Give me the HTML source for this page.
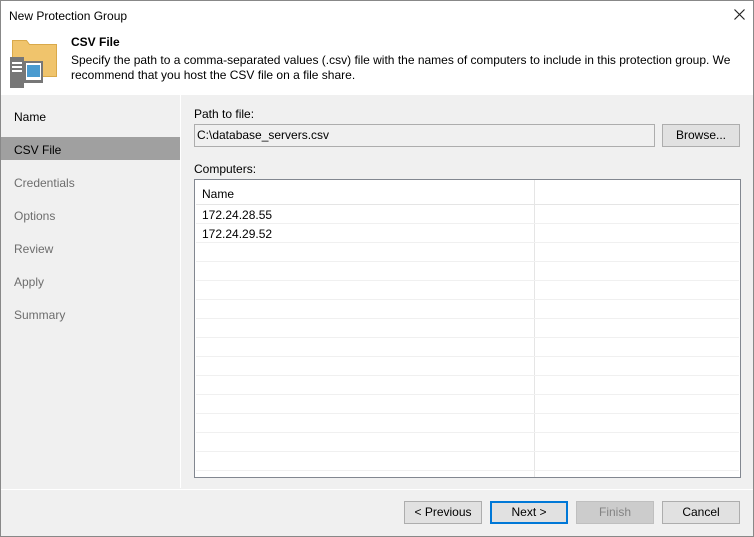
<!DOCTYPE html><html><head><style>
*{margin:0;padding:0;box-sizing:border-box}
body{width:754px;height:537px;background:#f0f0f0;font-family:"Liberation Sans","DejaVu Sans",sans-serif;font-size:12px;color:#000;position:relative;overflow:hidden}
.win{position:absolute;left:0;top:0;width:754px;height:537px;border:1px solid #888;}
.a{position:absolute}
.btn{position:absolute;height:23px;width:78px;background:#e1e1e1;border:1px solid #adadad;text-align:center;line-height:21px}
.nav{position:absolute;left:14px}
.row{position:absolute;left:1px;right:1px;height:1px;background:#f0f0f0}
</style></head><body><div class="win"></div>
<div class="a" style="left:1px;top:1px;width:752px;height:94px;background:#fff"></div>
<div class="a" style="left:9px;top:9px;font-size:12px">New Protection Group</div>
<svg class="a" style="left:734px;top:9px" width="11" height="11"><path d="M0.5 0.5L10.5 10.5M10.5 0.5L0.5 10.5" stroke="#222" stroke-width="1.2"/></svg>
<svg class="a" style="left:0;top:30px" width="70" height="62">
<path d="M12.5 10.5h14l3 4h27v32h-44z" fill="#f0c46c" stroke="#d9a94a"/>
<rect x="10" y="27" width="14" height="31" fill="#777"/>
<rect x="12" y="32" width="10" height="2" fill="#fff"/><rect x="12" y="36" width="10" height="2" fill="#fff"/><rect x="12" y="40" width="10" height="2" fill="#fff"/>
<rect x="24" y="31" width="19" height="22" fill="#777"/><rect x="26" y="33" width="15" height="17" fill="#fff"/><rect x="27" y="35" width="13" height="12" fill="#4a9bd0"/>
</svg>
<div class="a" style="left:71px;top:35px;font-weight:bold">CSV File</div>
<div class="a" style="left:71px;top:53px;line-height:15px;width:680px">Specify the path to a comma-separated values (.csv) file with the names of computers to include in this protection group. We recommend that you host the CSV file on a file share.</div>
<div class="a" style="left:180px;top:95px;width:1px;height:393px;background:#fff"></div>
<div class="a" style="left:1px;top:137px;width:179px;height:23px;background:#a0a0a0"></div>
<div class="nav" style="top:110px">Name</div>
<div class="nav" style="top:143px">CSV File</div>
<div class="nav" style="top:176px;color:#6d6d6d">Credentials</div>
<div class="nav" style="top:209px;color:#6d6d6d">Options</div>
<div class="nav" style="top:242px;color:#6d6d6d">Review</div>
<div class="nav" style="top:275px;color:#6d6d6d">Apply</div>
<div class="nav" style="top:308px;color:#6d6d6d">Summary</div>
<div class="a" style="left:194px;top:107px">Path to file:</div>
<div class="a" style="left:194px;top:124px;width:461px;height:23px;border:1px solid #adadad;background:#f0f0f0;padding:3px 2px">C:\database_servers.csv</div>
<div class="btn" style="left:662px;top:124px">Browse...</div>
<div class="a" style="left:194px;top:162px">Computers:</div>
<div class="a" style="left:194px;top:179px;width:547px;height:299px;border:1px solid #828790;background:#fff">
<div class="a" style="left:339px;top:0;width:1px;height:297px;background:#e5e5e5"></div>
<div class="a" style="left:7px;top:7px">Name</div>
<div class="a" style="left:7px;top:28px">172.24.28.55</div>
<div class="a" style="left:7px;top:47px">172.24.29.52</div>
<div class="row" style="top:24px;background:#e5e5e5"></div>
<div class="row" style="top:43px"></div><div class="row" style="top:62px"></div><div class="row" style="top:81px"></div><div class="row" style="top:100px"></div><div class="row" style="top:119px"></div><div class="row" style="top:138px"></div><div class="row" style="top:157px"></div><div class="row" style="top:176px"></div><div class="row" style="top:195px"></div><div class="row" style="top:214px"></div><div class="row" style="top:233px"></div><div class="row" style="top:252px"></div><div class="row" style="top:271px"></div><div class="row" style="top:290px"></div>
</div>
<div class="a" style="left:1px;top:489px;width:752px;height:1px;background:#fff"></div>
<div class="btn" style="left:404px;top:501px">&lt; Previous</div>
<div class="btn" style="left:490px;top:501px;border:2px solid #0078d7;line-height:19px">Next &gt;</div>
<div class="btn" style="left:576px;top:501px;background:#ccc;border-color:#bfbfbf;color:#838383">Finish</div>
<div class="btn" style="left:662px;top:501px">Cancel</div>
</body></html>
